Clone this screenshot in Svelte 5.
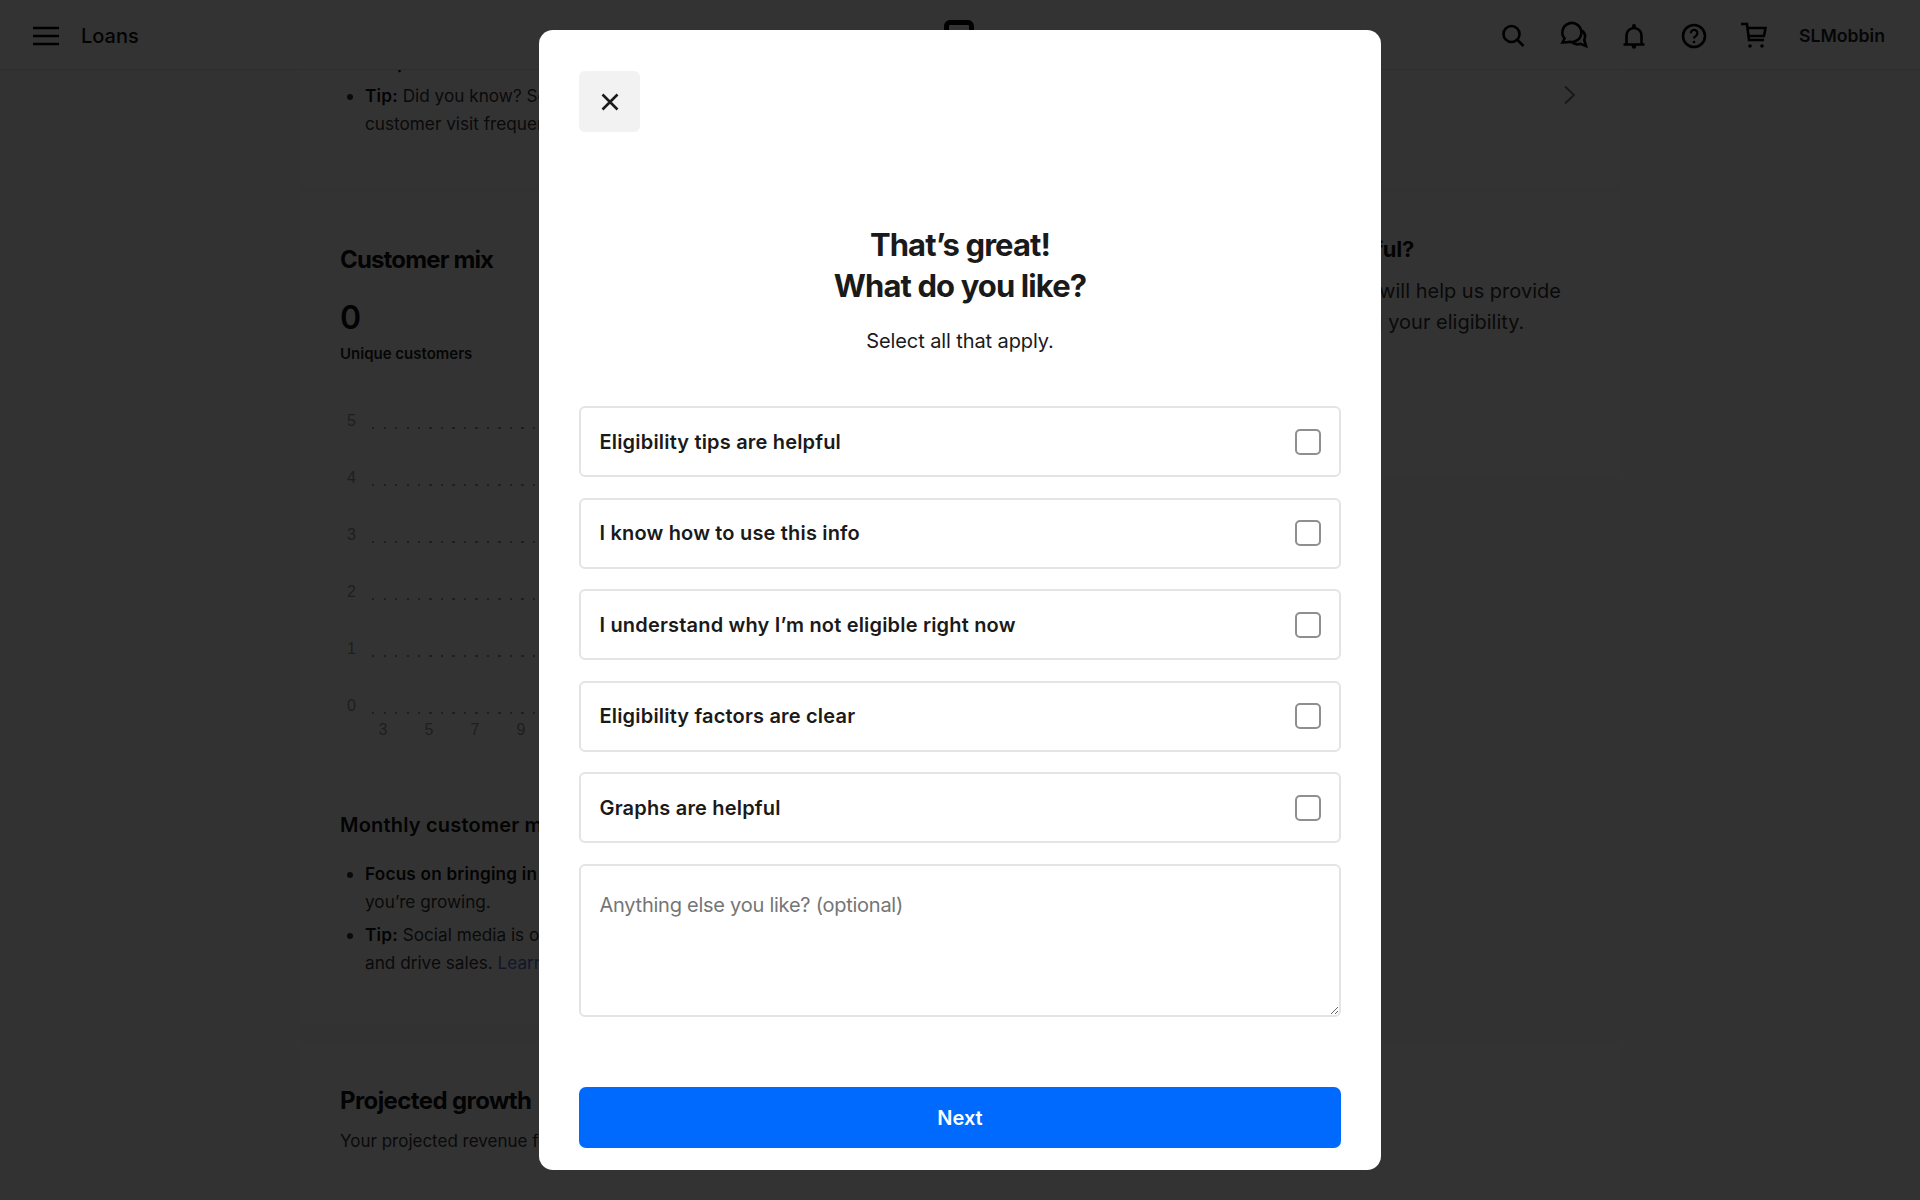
<script>
  const options = [
    'Eligibility tips are helpful',
    'I know how to use this info',
    'I understand why I’m not eligible right now',
    'Eligibility factors are clear',
    'Graphs are helpful'
  ];
  const yTicks = [5, 4, 3, 2, 1, 0];
  const xTicks = [3, 5, 7, 9];
</script>

<div class="page">
  <header class="topbar">
    <div class="left">
      <svg class="ico burger" viewBox="0 0 26 20" width="26" height="20"><path d="M0 2h26M0 10h26M0 18h26" /></svg>
      <span class="title">Loans</span>
    </div>
    <div class="logo"><span></span></div>
    <div class="right">
      <svg class="ico" viewBox="0 0 26 26" width="26" height="26"><circle cx="11.5" cy="11" r="8" /><path d="M17.5 17l6 6" /></svg>
      <svg class="ico" viewBox="0 0 28 28" width="28" height="28"><path d="M2.500 20.500 4.500 16.500A9.500 9.500 0 1 1 10 19.800c-2.500.5-5 .6-7.500.7z" /><path d="M22 8.500c3 2.500 3.800 6 2.300 9.500l1.700 6-5.500-2.200c-3 1-6 .5-8.500-1.500" /></svg>
      <svg class="ico" viewBox="0 0 26 26" width="26" height="26"><path d="M2.500 21.500h21M5.500 21.500v-9a7.500 7.500 0 0 1 15 0v9" /><circle class="fill" cx="13" cy="3" r="2" /><circle class="fill" cx="13" cy="23.500" r="2.200" /></svg>
      <svg class="ico" viewBox="0 0 26 26" width="26" height="26"><circle cx="13" cy="13" r="11" /><path class="thin" d="M9.800 10.200a3.300 3.300 0 1 1 5 2.800c-1.200.7-1.800 1.300-1.800 2.600" /><circle class="fill" cx="13" cy="19" r="1.300" /></svg>
      <svg class="ico" viewBox="0 0 28 28" width="28" height="28"><path d="M1 2h6l2 16h15M7.500 6h18l-1.500 8H8.500" /><circle class="fill" cx="10" cy="24" r="1.800" /><circle class="fill" cx="22" cy="24" r="1.800" /></svg>
      <span class="user">SLMobbin</span>
    </div>
  </header>

  <main class="content">
    <section class="card top-card">
      <div class="copy">
        <ul>
          <li><b>Keep customers coming back:</b> Repeat visits signal steady growth.</li>
          <li><b>Tip:</b> Did you know? Sending offers can increase your<br />customer visit frequency and overall monthly sales.</li>
        </ul>
      </div>
      <svg class="chev" viewBox="0 0 14 20" width="14" height="20"><path d="M2 1.500 11 10l-9 8.500" /></svg>
    </section>

    <div class="columns">
      <section class="card mix">
        <h2>Customer mix</h2>
        <div class="big">0</div>
        <div class="sub">Unique customers</div>
        <div class="chart">
          {#each yTicks as t}
            <div class="row"><span class="tick">{t}</span><span class="dots"></span></div>
          {/each}
          <div class="xaxis">
            {#each xTicks as x}<span>{x}</span>{/each}
          </div>
        </div>
        <h3>Monthly customer mix</h3>
        <ul>
          <li><b>Focus on bringing in new customers:</b> it is a sign<br />you’re growing.</li>
          <li><b>Tip:</b> Social media is one way to reach new customers<br />and drive sales. <a href="#top">Learn more</a></li>
        </ul>
      </section>

      <section class="card helpful">
        <h3>Was this information useful?</h3>
        <p>Your honest feedback will help us provide<br />better tips on checking your eligibility.</p>
      </section>
    </div>

    <section class="card growth">
      <h2>Projected growth</h2>
      <p>Your projected revenue for the next few months is shown below.</p>
    </section>
  </main>
</div>

<div class="overlay">
  <div class="modal">
    <button class="close" aria-label="Close">
      <svg viewBox="0 0 20 20" width="20" height="20"><path d="M2.500 2.500l15 15M17.500 2.500l-15 15" /></svg>
    </button>
    <h1>That’s great!<br />What do you like?</h1>
    <p class="hint">Select all that apply.</p>
    <div class="options">
      {#each options as o}
        <label class="option"><span>{o}</span><input type="checkbox" /></label>
      {/each}
      <textarea placeholder="Anything else you like? (optional)"></textarea>
    </div>
    <button class="next">Next</button>
  </div>
</div>

<style>
  :global(body) {
    margin: 0;
    overflow: hidden;
    font-family: Inter, "Liberation Sans", sans-serif;
    color: #1a1a1a;
    background: #fafafa;
  }
  .page { height: 1200px; overflow: hidden; }
  .topbar {
    position: relative;
    z-index: 1;
    height: 70px;
    box-sizing: border-box;
    background: #fff;
    border-bottom: 1px solid #e4e4e4;
    display: grid;
    grid-template-columns: 1fr auto 1fr;
    align-items: center;
    padding: 2px 35px 0 33px;
  }
  .left { display: flex; align-items: center; gap: 22px; }
  .title { font-size: 20px; font-weight: 500; color: #111; }
  .logo { width: 30px; height: 30px; margin-top: -2px; box-sizing: border-box; border: 5px solid #000; border-radius: 6px; }
  .right { display: flex; align-items: center; justify-content: flex-end; gap: 33.500px; }
  .user { font-size: 17.700px; font-weight: 600; margin-left: -3px; color: #222; }
  .ico { fill: none; stroke: #000; stroke-width: 2.600; display: block; overflow: visible; }
  .ico .fill { fill: #000; stroke: none; }
  .ico .thin { stroke-width: 2.200; }

  .content { width: 1320px; margin: -14px auto 0; display: flex; flex-direction: column; gap: 6px; }
  .card { background: #fff; box-sizing: border-box; border-radius: 8px; }
  ul { margin: 0; padding: 0 0 0 25px; font-size: 17.200px; line-height: 28px; color: #333; }
  li + li { margin-top: 5px; }
  li b { color: #111; font-weight: 600; letter-spacing: .2px; }
  a { color: #5470d8; text-decoration: none; }

  .top-card { height: 130px; padding: 0 40px; display: flex; justify-content: space-between; }
  .top-card .copy { margin-top: -7px; }
  .chev { fill: none; stroke: #777; stroke-width: 2; margin-top: 29px; margin-right: 3px; }

  .columns { display: grid; grid-template-columns: 770px 530px; gap: 20px; align-items: start; }
  .mix { height: 832px; padding: 53px 40px 0; }
  h2 { margin: 0; font-size: 24px; line-height: 30px; font-weight: 700; letter-spacing: -.85px; color: #111; }
  .big { font-size: 32px; line-height: 40px; font-weight: 600; margin-top: 23px; color: #111; }
  .sub { font-size: 15px; line-height: 20px; font-weight: 600; margin-top: 6px; color: #222; }
  .chart { margin-top: 38px; height: 321px; }
  .row { height: 57px; display: flex; align-items: flex-end; }
  .row:first-child { height: 30px; }
  .tick { width: 32px; padding-left: 7px; box-sizing: border-box; font-size: 16px; line-height: 22px; color: #999; font-family: "Liberation Sans", sans-serif; }
  .dots {
    flex: 1;
    height: 2px;
    margin-bottom: 3px;
    background: repeating-linear-gradient(90deg, #999 0 2px, transparent 2px 11.500px);
  }
  .xaxis { display: flex; gap: 30px; padding-left: 35px; margin-top: 3px; font-size: 16px; line-height: 20px; color: #999; font-family: "Liberation Sans", sans-serif; }
  .xaxis span { width: 16px; text-align: center; }
  h3 { margin: 0; font-size: 20px; line-height: 26px; font-weight: 600; letter-spacing: .2px; color: #111; }
  .mix h3 { margin-top: 89px; }
  .mix ul { margin-top: 22px; }

  .helpful { height: 286px; padding: 43px 40px 0 40px; }
  .helpful h3 { font-size: 22px; line-height: 28px; font-weight: 700; letter-spacing: -.2px; margin-left: -17px; }
  .helpful p { margin: 13px 0 0 36px; font-size: 20px; line-height: 31px; color: #333; white-space: nowrap; }

  .growth { height: 200px; margin-top: 12px; padding: 44px 40px 0; }
  .growth h2 { letter-spacing: -.6px; }
  .growth p { margin: 12px 0 0; font-size: 17px; line-height: 26px; color: #333; }

  .overlay {
    position: fixed;
    inset: 0;
    z-index: 5;
    background: rgba(0, 0, 0, .8);
    display: flex;
    align-items: center;
    justify-content: center;
  }
  .modal {
    width: 842px;
    height: 1140px;
    box-sizing: border-box;
    background: #fff;
    border-radius: 14px;
    padding: 41px 40px 22px;
    display: flex;
    flex-direction: column;
  }
  .close {
    width: 61px;
    height: 61px;
    padding: 0;
    border: 0;
    border-radius: 6px;
    background: #f2f2f2;
    display: flex;
    align-items: center;
    justify-content: center;
  }
  .close svg { fill: none; stroke: #1a1a1a; stroke-width: 2.600; }
  h1 {
    margin: 92px 0 0;
    text-align: center;
    font-size: 31px;
    line-height: 41px;
    font-weight: 700;
    letter-spacing: -.9px;
    color: #1a1a1a;
  }
  .hint { margin: 21px 0 0; text-align: center; font-size: 20px; line-height: 28px; letter-spacing: -.1px; color: #1a1a1a; }
  .options { margin-top: 51px; display: flex; flex-direction: column; gap: 20.500px; }
  .option {
    height: 71px;
    box-sizing: border-box;
    border: 2px solid #e4e4e4;
    border-radius: 6px;
    padding: 0 18px 0 18.500px;
    display: flex;
    align-items: center;
    justify-content: space-between;
    font-size: 20px;
    font-weight: 600;
    letter-spacing: .18px;
    color: #1a1a1a;
  }
  input {
    appearance: none;
    width: 26px;
    height: 26px;
    box-sizing: border-box;
    margin: 0;
    border: 2.500px solid #8f8f8f;
    border-radius: 5px;
    background: #fff;
  }
  textarea {
    height: 153px;
    box-sizing: border-box;
    border: 2px solid #e4e4e4;
    border-radius: 6px;
    padding: 25px 18.500px;
    resize: vertical;
    font: 400 20px/28px Inter, "Liberation Sans", sans-serif;
    letter-spacing: -.25px;
    outline: none;
  }
  textarea::placeholder { color: #757575; opacity: 1; }
  .next {
    margin-top: auto;
    height: 61px;
    border: 0;
    border-radius: 7px;
    background: #006aff;
    color: #fff;
    font: 600 20px Inter, "Liberation Sans", sans-serif;
  }
</style>
